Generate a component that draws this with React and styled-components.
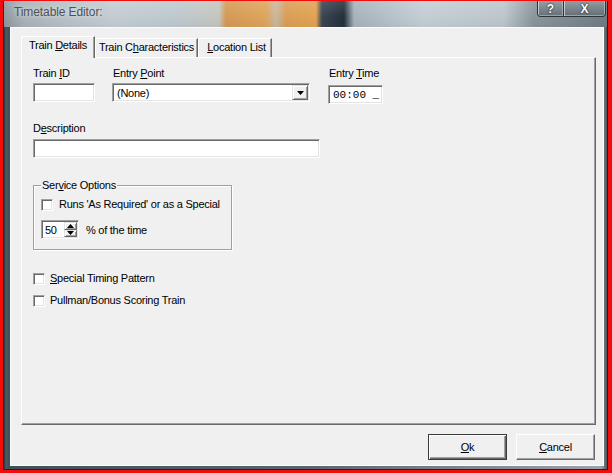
import React from "react";
import styled, { createGlobalStyle } from "styled-components";

const GlobalStyle = createGlobalStyle`
  html, body { margin: 0; padding: 0; background: #f20d0d; }
  body {
    font-family: "Liberation Sans", Arial, sans-serif;
    font-size: 11px;
    color: #000;
  }
  * { box-sizing: border-box; }
`;

const Page = styled.div`
  width: 612px;
  height: 473px;
  padding: 1px 4px 3px 3px;
  background: #f20d0d;
  display: flex;
`;

const Window = styled.div`
  flex: 1;
  display: flex;
  flex-direction: column;
  border: 1px solid #1b2327;
  border-top: none;
  background: linear-gradient(90deg, #2a383e 0px, #4a5b62 2px, #3f5057 5px, #56666d 50%, #9aa3a8 99%, #4a565c 100%);
`;

const TitleBar = styled.div`
  height: 26px;
  display: flex;
  align-items: flex-start;
  background:
    linear-gradient(180deg, rgba(255,255,255,0.12) 0%, rgba(255,255,255,0) 60%, rgba(0,0,0,0.04) 100%),
    linear-gradient(90deg,
      #8e989e 0px, #a9b3b9 20px, #b7c1c7 60px, #c3cdd3 110px, #bec9d0 170px,
      #c5c6c0 215px, #d39a55 222px, #dfa55c 262px, #c8b8a2 272px, #d99e58 282px,
      #e3a352 312px, #3b4654 318px, #24303c 340px, #a7b3bb 350px, #c4ced5 420px,
      #bcc6cc 500px, #8a959c 530px, #707c84 603px);
`;

const Title = styled.div`
  padding: 4px 0 0 10px;
  font-size: 12px;
  line-height: 14px;
  letter-spacing: -0.1px;
  color: #4c5256;
  text-shadow: 0 0 5px rgba(255, 255, 255, 0.85);
`;

const CaptionButtons = styled.div`
  margin-left: auto;
  margin-right: 1px;
  display: flex;
  height: 16px;
  border: 1px solid #2c3439;
  border-top: none;
  border-radius: 0 0 4px 4px;
  overflow: hidden;
`;

const CaptionButton = styled.div`
  width: ${(p) => p.$w}px;
  height: 100%;
  display: flex;
  align-items: center;
  justify-content: center;
  background: linear-gradient(180deg, rgba(150,160,166,0.75), rgba(95,106,113,0.85));
  box-shadow: inset 1px 0 rgba(255,255,255,0.55), inset -1px -1px rgba(255,255,255,0.35);
  border-left: ${(p) => (p.$sep ? "1px solid #2c3439" : "none")};
  color: #fff;
  font-weight: bold;
  font-size: ${(p) => p.$fs}px;
  line-height: 1;
  text-shadow: 0 0 2px #1d252a, 0 0 1px #1d252a;
`;

const Client = styled.div`
  flex: 1;
  margin: 0 3px 3px 6px;
  background: #f0f0f0;
  border: 1px solid #fbfcfd;
  padding: 8px 7px 5px 10px;
  display: flex;
  flex-direction: column;
`;

const TabStrip = styled.div`
  height: 21px;
  display: flex;
  align-items: flex-end;
  position: relative;
  z-index: 2;
`;

const Tab = styled.div`
  width: ${(p) => p.$w}px;
  height: ${(p) => (p.$active ? 22 : 19)}px;
  margin-bottom: ${(p) => (p.$active ? -1 : 0)}px;
  padding-top: 2px;
  padding-left: ${(p) => p.$pl || 0}px;
  text-align: center;
  line-height: 13px;
  letter-spacing: -0.25px;
  white-space: nowrap;
  background: #f0f0f0;
  border-top: 1px solid #fff;
  border-left: 1px solid #fff;
  border-right: 1px solid #696969;
  border-top-left-radius: 2px;
  box-shadow: inset -1px 0 #a0a0a0;
`;

const Panel = styled.div`
  flex: 1;
  position: relative;
  z-index: 1;
  background: #f0f0f0;
  border-top: 1px solid #fff;
  border-left: 1px solid #fff;
  border-right: 1px solid #696969;
  border-bottom: 1px solid #696969;
  box-shadow: inset -1px -1px #a0a0a0;
  padding: 9px 0 0 11px;
  display: flex;
  flex-direction: column;
  align-items: flex-start;
`;

const Row = styled.div`
  display: flex;
  align-items: flex-start;
  margin-top: ${(p) => p.$mt || 0}px;
`;

const Field = styled.div`
  display: flex;
  flex-direction: column;
  margin-right: ${(p) => p.$mr || 0}px;
  margin-top: ${(p) => p.$mt || 0}px;
`;

const Label = styled.div`
  height: 13px;
  line-height: 13px;
  letter-spacing: -0.25px;
  white-space: nowrap;
  padding-left: ${(p) => p.$pl || 0}px;
  margin-bottom: ${(p) => (p.$mb != null ? p.$mb : 3)}px;
`;

const sunken = `
  background: #fff;
  border: 1px solid;
  border-color: #a0a0a0 #fff #fff #a0a0a0;
  box-shadow: inset 1px 1px #696969, inset -1px -1px #e3e3e3;
`;

const raised = `
  background: #f0f0f0;
  border: 1px solid;
  border-color: #e3e3e3 #696969 #696969 #e3e3e3;
  box-shadow: inset 1px 1px #fff, inset -1px -1px #a0a0a0;
`;

const TextBox = styled.div`
  ${sunken}
  width: ${(p) => p.$w}px;
  height: 19px;
  margin-top: ${(p) => p.$mt || 0}px;
  padding-left: ${(p) => p.$pl || 2}px;
  display: flex;
  align-items: center;
  white-space: nowrap;
  font-family: ${(p) => (p.$mono ? '"Liberation Mono", "DejaVu Sans Mono", monospace' : "inherit")};
  letter-spacing: ${(p) => (p.$mono ? "0" : "-0.25px")};
`;

const ComboText = styled.div`
  flex: 1;
  padding-left: 2px;
`;

const ComboArrow = styled.div`
  ${raised}
  width: 16px;
  height: 15px;
  margin-right: 1px;
  display: flex;
  align-items: center;
  justify-content: center;
`;

const GroupBox = styled.fieldset`
  width: 199px;
  margin: 21px 0 0 0;
  padding: 0 8px 10px 7px;
  min-width: 0;
  border: 1px solid #a0a0a0;
  box-shadow: inset 1px 1px 0 #fff, 1px 1px 0 #fff;
  display: flex;
  flex-direction: column;
  align-items: flex-start;
`;

const Legend = styled.legend`
  padding: 0 1px;
  line-height: 13px;
  letter-spacing: -0.25px;
  background: #f0f0f0;
`;

const CheckRow = styled.div`
  display: flex;
  align-items: center;
  gap: ${(p) => p.$gap || 5}px;
  height: 13px;
  margin-top: ${(p) => p.$mt || 0}px;
  line-height: 13px;
  letter-spacing: -0.25px;
  white-space: nowrap;
`;

const CheckBox = styled.div`
  ${sunken}
  width: 12px;
  height: 12px;
  flex: none;
`;

const SpinRow = styled.div`
  display: flex;
  align-items: center;
  gap: 7px;
  margin-top: 9px;
  letter-spacing: -0.25px;
  white-space: nowrap;
`;

const SpinBox = styled.div`
  ${sunken}
  width: 38px;
  height: 19px;
  display: flex;
  align-items: stretch;
  padding: 1px 1px 1px 3px;
`;

const SpinValue = styled.div`
  flex: 1;
  display: flex;
  align-items: center;
`;

const SpinButtons = styled.div`
  width: 13px;
  display: flex;
  flex-direction: column;
`;

const SpinButton = styled.div`
  ${raised}
  flex: 1;
  display: flex;
  align-items: center;
  justify-content: center;
`;

const ButtonRow = styled.div`
  display: flex;
  justify-content: flex-end;
  gap: 9px;
  margin-top: 9px;
  padding-right: 1px;
`;

const Button = styled.div`
  width: 79px;
  height: 26px;
  display: flex;
  align-items: center;
  justify-content: center;
  letter-spacing: -0.25px;
  background: #f0f0f0;
  border: 1px solid;
  border-color: ${(p) => (p.$default ? "#3a3a3a" : "#fff #696969 #696969 #fff")};
  box-shadow: ${(p) =>
    p.$default
      ? "inset 1px 1px #fff, inset -1px -1px #696969, inset -2px -2px #a0a0a0"
      : "inset -1px -1px #a0a0a0, inset 1px 1px #f0f0f0"};
`;

const DownTri = () => (
  <svg width="7" height="4" viewBox="0 0 7 4">
    <path d="M0 0h7L3.5 4z" fill="#000" />
  </svg>
);

const SmallTri = ({ up }) => (
  <svg width="7" height="4" viewBox="0 0 7 4">
    <path d={up ? "M3.5 0L7 4H0z" : "M0 0h7L3.5 4z"} fill="#000" />
  </svg>
);

export default function App() {
  return (
    <>
      <GlobalStyle />
      <Page>
        <Window>
          <TitleBar>
            <Title>Timetable Editor:</Title>
            <CaptionButtons>
              <CaptionButton $w={25} $fs={12}>?</CaptionButton>
              <CaptionButton $w={42} $fs={12} $sep>X</CaptionButton>
            </CaptionButtons>
          </TitleBar>
          <Client>
            <TabStrip>
              <Tab $w={74} $active>
                Train <u>D</u>etails
              </Tab>
              <Tab $w={103}>
                Train C<u>h</u>aracteristics
              </Tab>
              <Tab $w={74} $pl={3}>
                <u>L</u>ocation List
              </Tab>
            </TabStrip>
            <Panel>
              <Row>
                <Field $mr={17}>
                  <Label>
                    Train <u>I</u>D
                  </Label>
                  <TextBox $w={62} />
                </Field>
                <Field $mr={18}>
                  <Label $pl={1}>
                    Entry <u>P</u>oint
                  </Label>
                  <TextBox $w={198}>
                    <ComboText>(None)</ComboText>
                    <ComboArrow>
                      <DownTri />
                    </ComboArrow>
                  </TextBox>
                </Field>
                <Field>
                  <Label $pl={1}>
                    Entry <u>T</u>ime
                  </Label>
                  <TextBox $w={55} $mt={2} $pl={4} $mono>
                    00:00 _
                  </TextBox>
                </Field>
              </Row>
              <Row $mt={18}>
                <Field>
                  <Label $mb={4}>
                    D<u>e</u>scription
                  </Label>
                  <TextBox $w={287} />
                </Field>
              </Row>
              <GroupBox>
                <Legend>
                  Ser<u>v</u>ice Options
                </Legend>
                <CheckRow $mt={6} $gap={6}>
                  <CheckBox />
                  <span>Runs 'As Required' or as a Special</span>
                </CheckRow>
                <SpinRow>
                  <SpinBox>
                    <SpinValue>50</SpinValue>
                    <SpinButtons>
                      <SpinButton>
                        <SmallTri up />
                      </SpinButton>
                      <SpinButton>
                        <SmallTri />
                      </SpinButton>
                    </SpinButtons>
                  </SpinBox>
                  <span>% of the time</span>
                </SpinRow>
              </GroupBox>
              <CheckRow $mt={22}>
                <CheckBox />
                <span>
                  <u>S</u>pecial Timing Pattern
                </span>
              </CheckRow>
              <CheckRow $mt={9}>
                <CheckBox />
                <span>Pullman/Bonus Scoring Train</span>
              </CheckRow>
            </Panel>
            <ButtonRow>
              <Button $default>
                <span>
                  <u>O</u>k
                </span>
              </Button>
              <Button>
                <span>
                  <u>C</u>ancel
                </span>
              </Button>
            </ButtonRow>
          </Client>
        </Window>
      </Page>
    </>
  );
}
